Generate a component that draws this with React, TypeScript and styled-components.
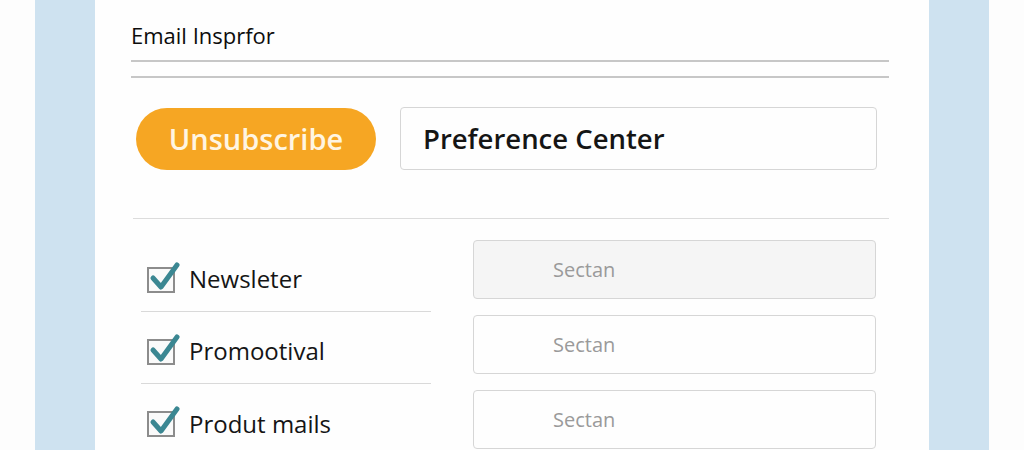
import styled, { createGlobalStyle } from 'styled-components'

const Global = createGlobalStyle`
  html, body {
    margin: 0;
    padding: 0;
    background: #fdfdfd;
  }
  body {
    font-family: "Open Sans", "Noto Sans", "DejaVu Sans", sans-serif;
  }
`

const Page = styled.div`
  display: flex;
  width: 1024px;
  height: 450px;
  overflow: hidden;
  background: #fdfdfd;
`

const Gutter = styled.div`
  width: 35px;
  flex: none;
`

const Strip = styled.div`
  width: 60px;
  flex: none;
  background: #cee2f0;
`

const Panel = styled.main`
  flex: 1;
  background: #fefefe;
  padding: 20px 40px 0 36px;
  box-sizing: border-box;
`

const Title = styled.h1`
  margin: 0;
  font-size: 22px;
  font-weight: 400;
  color: #0c0c0c;
  line-height: 30px;
`

const Rule = styled.hr<{ $top: number; $color?: string; $weight?: number; $inset?: number }>`
  border: none;
  margin: ${p => p.$top}px 0 0 ${p => p.$inset ?? 0}px;
  height: ${p => p.$weight ?? 2}px;
  background: ${p => p.$color ?? '#c7c7c7'};
`

const ActionRow = styled.div`
  display: flex;
  align-items: center;
  gap: 24px;
  margin: 29px 0 0 5px;
`

const PillButton = styled.button`
  width: 240px;
  height: 62px;
  border: none;
  border-radius: 31px;
  background: #f6a623;
  color: #fff5e2;
  font-family: inherit;
  font-size: 29px;
  font-weight: 600;
  padding: 0;
`

const CenterBox = styled.div`
  width: 477px;
  height: 63px;
  box-sizing: border-box;
  border: 1px solid #d6d6d6;
  border-radius: 4px;
  display: flex;
  align-items: center;
  padding-left: 22px;
  font-size: 27.5px;
  font-weight: 600;
  color: #151515;
`

const Body = styled.div`
  display: grid;
  grid-template-columns: 290px 403px;
  column-gap: 42px;
  margin: 21px 0 0 10px;
`

const OptionList = styled.ul`
  list-style: none;
  margin: 0;
  padding: 0;
`

const Option = styled.li<{ $last?: boolean }>`
  display: flex;
  align-items: center;
  gap: 12px;
  height: 72px;
  padding: 6px 0 0 6px;
  box-sizing: border-box;
  border-bottom: ${p => (p.$last ? 'none' : '1px solid #d9d9d9')};
  font-size: 24px;
  color: #151515;
`

const CheckWrap = styled.span`
  position: relative;
  width: 30px;
  height: 28px;
  flex: none;
`

const CheckFrame = styled.span`
  position: absolute;
  left: 0;
  bottom: 0;
  width: 28px;
  height: 26px;
  box-sizing: border-box;
  border: 2px solid #8c8c8c;
  background: #fafafa;
`

const CheckMark = styled.svg`
  position: absolute;
  left: 2px;
  top: -4px;
`

const SectionList = styled.div`
  display: flex;
  flex-direction: column;
  gap: 16px;
`

const SectionBox = styled.div<{ $shaded?: boolean }>`
  height: 59px;
  box-sizing: border-box;
  border: 1px solid #d6d6d6;
  border-radius: 4px;
  background: ${p => (p.$shaded ? '#f5f5f5' : '#fefefe')};
  display: flex;
  align-items: center;
  padding-left: 79px;
  font-size: 20px;
  color: #9a9a9a;
`

function Check() {
  return (
    <CheckWrap>
      <CheckFrame />
      <CheckMark width="32" height="32" viewBox="0 0 32 32">
        <path
          d="M4 17 L12 26 L28 4"
          fill="none"
          stroke="#3b8792"
          strokeWidth="5"
          strokeLinecap="round"
          strokeLinejoin="round"
        />
      </CheckMark>
    </CheckWrap>
  )
}

const options = ['Newsleter', 'Promootival', 'Produt mails']

export default function App() {
  return (
    <>
      <Global />
      <Page>
        <Gutter />
        <Strip />
        <Panel>
          <Title>Email Insprfor</Title>
          <Rule $top={10} />
          <Rule $top={14} />
          <ActionRow>
            <PillButton>Unsubscribe</PillButton>
            <CenterBox>Preference Center</CenterBox>
          </ActionRow>
          <Rule $top={48} $weight={1} $color="#dcdcdc" $inset={2} />
          <Body>
            <OptionList>
              {options.map((o, i) => (
                <Option key={o} $last={i === options.length - 1}>
                  <Check />
                  {o}
                </Option>
              ))}
            </OptionList>
            <SectionList>
              <SectionBox $shaded>Sectan</SectionBox>
              <SectionBox>Sectan</SectionBox>
              <SectionBox>Sectan</SectionBox>
            </SectionList>
          </Body>
        </Panel>
        <Strip />
        <Gutter />
      </Page>
    </>
  )
}
